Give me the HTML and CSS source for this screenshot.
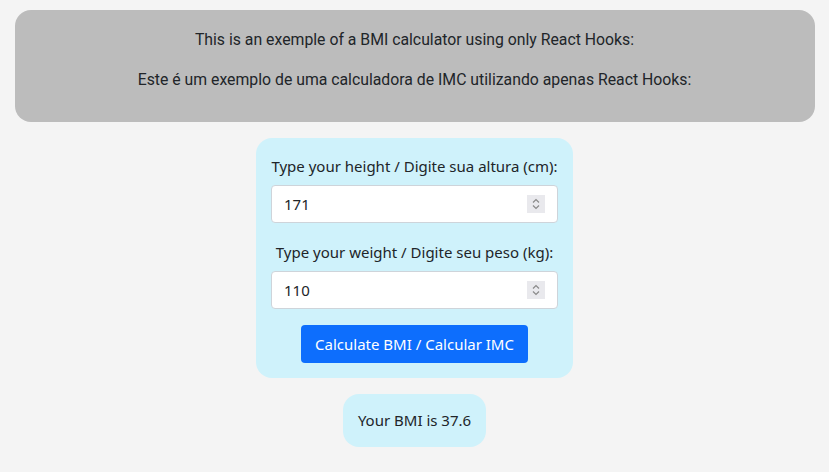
FILE: index.html
```html
<!DOCTYPE html>
<html lang="en">
<head>
<meta charset="utf-8">
<title>BMI Calculator</title>
<link rel="stylesheet" href="styles.css">
</head>
<body>
<header class="intro">
  <p>This is an exemple of a BMI calculator using only React Hooks:</p>
  <p>Este é um exemplo de uma calculadora de IMC utilizando apenas React Hooks:</p>
</header>
<main class="main">
  <form class="card">
    <label class="label" for="h">Type your height / Digite sua altura (cm):</label>
    <div class="field">
      <input class="input" id="h" type="text" value="171">
      <span class="spin"><svg width="18" height="18" viewBox="0 0 18 18"><path d="M6 7.5 L9 4.5 L12 7.5" fill="none" stroke="#8a8a8a" stroke-width="1.2"/><path d="M6 10.5 L9 13.5 L12 10.5" fill="none" stroke="#8a8a8a" stroke-width="1.2"/></svg></span>
    </div>
    <label class="label" for="w">Type your weight / Digite seu peso (kg):</label>
    <div class="field">
      <input class="input" id="w" type="text" value="110">
      <span class="spin"><svg width="18" height="18" viewBox="0 0 18 18"><path d="M6 7.5 L9 4.5 L12 7.5" fill="none" stroke="#8a8a8a" stroke-width="1.2"/><path d="M6 10.5 L9 13.5 L12 10.5" fill="none" stroke="#8a8a8a" stroke-width="1.2"/></svg></span>
    </div>
    <button class="btn" type="button">Calculate BMI / Calcular IMC</button>
  </form>
  <div class="result">Your BMI is 37.6</div>
</main>
</body>
</html>
```
FILE: styles.css
```css
html, body {
  margin: 0;
  padding: 0;
}
body {
  background: #f4f4f4;
  font-family: "Noto Sans", "Open Sans", sans-serif;
  font-size: 15px;
  line-height: 24px;
  color: #212529;
  padding-top: 10px;
}
.intro {
  width: 800px;
  margin: 0 auto;
  box-sizing: border-box;
  background: #bcbcbc;
  border-radius: 16px;
  padding: 18px 0 30px;
  display: flex;
  flex-direction: column;
  gap: 16px;
  text-align: center;
  font-family: Roboto, "Noto Sans", sans-serif;
  font-size: 15.8px;
}
.intro p {
  margin: 0;
}
.main {
  display: flex;
  flex-direction: column;
  align-items: center;
  gap: 16px;
  margin-top: 16px;
}
.card {
  width: 317px;
  box-sizing: border-box;
  background: #cff2fb;
  border-radius: 16px;
  padding: 16px 15px 15px;
  display: flex;
  flex-direction: column;
  align-items: center;
}
.label {
  display: block;
  text-align: center;
  margin-bottom: 7px;
  white-space: nowrap;
}
.field {
  position: relative;
  width: 100%;
  margin-bottom: 17px;
}
.card .field:last-of-type {
  margin-bottom: 16px;
}
.input {
  display: block;
  width: 100%;
  box-sizing: border-box;
  height: 38px;
  border: 1px solid #ced4da;
  border-radius: 4px;
  background: #fff;
  padding: 6px 12px;
  font: inherit;
  color: #212529;
}
.spin {
  position: absolute;
  right: 13px;
  top: 10px;
  width: 18px;
  height: 18px;
  background: #e9e9ed;
  display: flex;
}
.btn {
  width: 227px;
  height: 38px;
  border: none;
  border-radius: 4px;
  background: #0d6efd;
  color: #fff;
  font: inherit;
  padding: 0;
}
.result {
  background: #cff2fb;
  border-radius: 16px;
  padding: 14px 15px 15px;
  text-align: center;
}
```
